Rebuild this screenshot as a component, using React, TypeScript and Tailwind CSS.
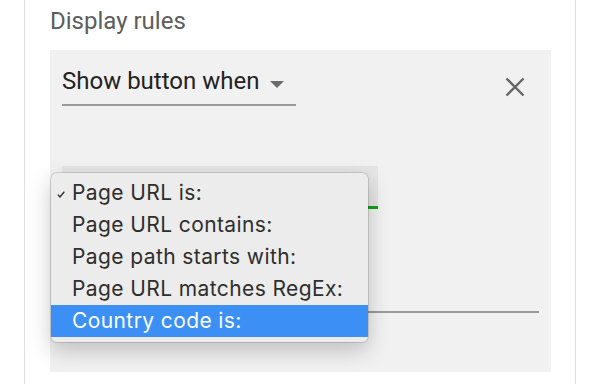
import React from "react";

const items = [
  "Page URL is:",
  "Page URL contains:",
  "Page path starts with:",
  "Page URL matches RegEx:",
  "Country code is:",
];

export default function App() {
  return (
    <div className="relative w-[600px] h-[384px] overflow-hidden bg-white" style={{ fontFamily: "Roboto, 'Liberation Sans', sans-serif" }}>
      <div className="ml-[24px] w-[552px] h-full border-x border-[#e0e0e0] pl-[25px] pr-[24px] pt-[8px]">
        <div className="text-[24px] leading-[26px] text-[#5c5c5c] mb-[16px]">Display rules</div>
        <div className="h-[322px] bg-[#f1f1f1] pl-[12px] pr-[12px] pt-[17px]">
          <div className="flex items-start justify-between">
            <div className="w-[234px] flex items-center pb-[9px] border-b-2 border-[#9a9a9a]">
              <span className="text-[24px] leading-[28px] text-[#222]">Show button when</span>
              <svg className="ml-[11px] mt-[6px]" width="14" height="7" viewBox="0 0 14 7">
                <path d="M0 0 L14 0 L7 7 Z" fill="#6b6b6b" />
              </svg>
            </div>
            <svg className="mt-[10px] mr-[14px]" width="20" height="20" viewBox="0 0 20 20">
              <path d="M1.5 1.5 L18.5 18.5 M18.5 1.5 L1.5 18.5" stroke="#666" strokeWidth="2.4" strokeLinecap="butt" />
            </svg>
          </div>
          <div className="mt-[60px] w-[316px] h-[43px] bg-[#e5e5e5] border-b-[3px] border-[#10a510]" />
          <div className="mt-[102px] w-[477px] border-b-2 border-[#9a9a9a]" />
        </div>
      </div>

      <div
        className="absolute left-[51px] top-[173px] w-[317px] h-[169px] rounded-[6px] bg-[#ececec] py-[4px] shadow-[0_0_0_1px_rgba(0,0,0,0.12),0_8px_22px_rgba(0,0,0,0.22)]"
        style={{ fontFamily: "Inter, 'Liberation Sans', sans-serif" }}
      >
        {items.map((t, i) => (
          <div
            key={t}
            className={
              i === 4
                ? "relative h-[32px] pl-[21px] flex items-center text-[21px] tracking-[0.4px] text-white bg-[#3b8ff5]"
                : "relative h-[32px] pl-[21px] flex items-center text-[21px] tracking-[0.4px] text-[#2e2e2e]"
            }
          >
            {i === 0 && (
              <svg className="absolute left-[6px] top-[14px]" width="8" height="7" viewBox="0 0 8 7">
                <path d="M0.8 3.6 L3 6 L7.3 0.8" stroke="#333" strokeWidth="1.4" fill="none" />
              </svg>
            )}
            <span className="leading-[32px]">{t}</span>
          </div>
        ))}
      </div>
    </div>
  );
}
